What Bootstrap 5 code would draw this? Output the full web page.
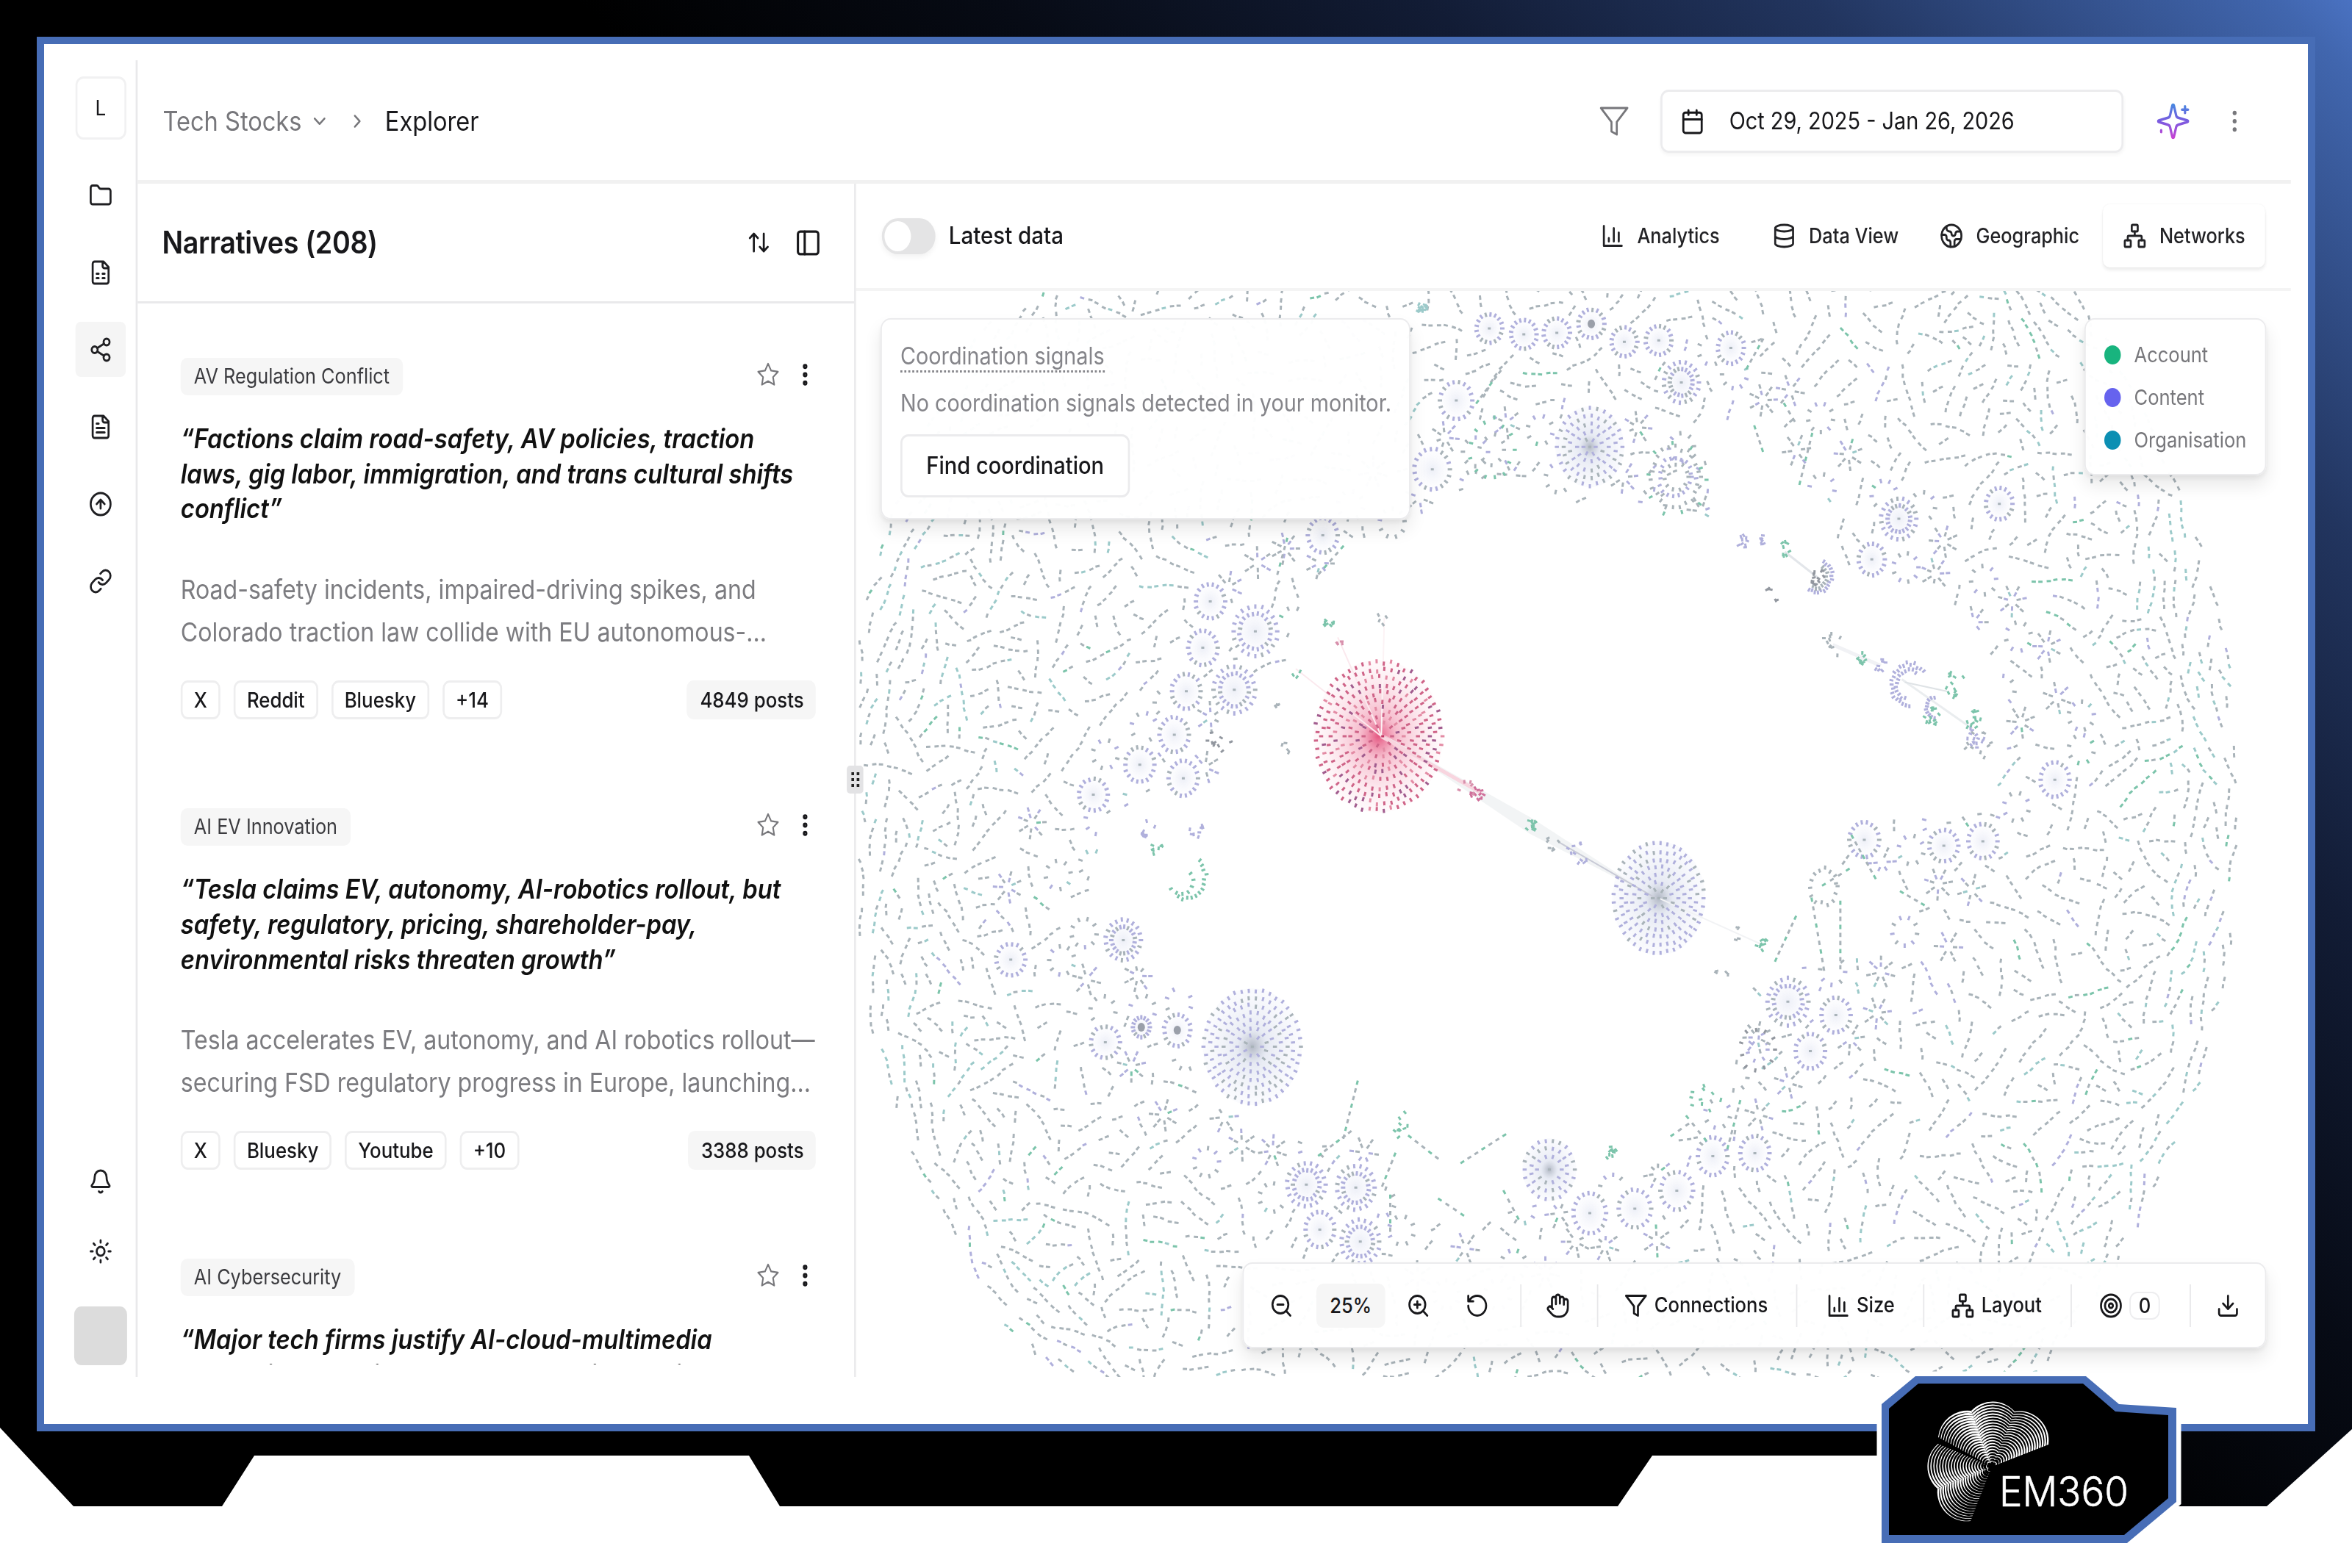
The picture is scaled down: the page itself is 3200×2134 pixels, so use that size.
<!DOCTYPE html>
<html lang="en">
<head>
  <meta charset="UTF-8">
  <title>Explorer - Tech Stocks</title>
  <link href="https://cdn.jsdelivr.net/npm/bootstrap@5.3.2/dist/css/bootstrap.min.css" rel="stylesheet">
  <style>
    body { width: 3200px; height: 2134px; overflow: hidden; background: #fff; font-family: Inter, "Liberation Sans", sans-serif; color: #18181b; }
    .stage { height: 2050px; padding: 50px; background: linear-gradient(225deg, #4a72c2 0, #4166ae 2%, #22355f 14%, #121c35 24%, #070b15 35%, #000 46%);
      clip-path: polygon(0 0, 3200px 0, 3200px 1945px, 3084px 2050px, 2900px 2050px, 2900px 1981px, 2248px 1981px, 2201px 2050px, 1061px 2050px, 1019px 1981px, 346px 1981px, 302px 2050px, 100px 2050px, 0 1943px); }
    .screen { height: 1898px; border: 10px solid #476db6; background: #fff; padding: 22px 0 0 40px; }
    /* the app is drawn a little narrower than tall */
    .app { width: 3352px; height: 1792px; transform: scaleX(.9); transform-origin: 0 0; }
    .ico { width: 36px; height: 36px; fill: none; stroke: currentColor; stroke-width: 2; stroke-linecap: round; stroke-linejoin: round; flex: none; }
    .thin { stroke-width: 1.5; }

    .side { width: 97px; padding: 22px 14px 16px 2px; border-right: 3px solid #e9e9eb; }
    .side .org { width: 77px; height: 86px; border: 3px solid #f1f1f2; border-radius: 12px; font-size: 29px; margin-bottom: 38px; }
    .side a { width: 76px; height: 75px; border-radius: 8px; color: #1f1f22; }
    .side .main-nav { gap: 30px; }
    .side .sub-nav { gap: 20px; margin-bottom: 38px; }
    .side .on { background: #f5f5f5; }
    .side .me { width: 80px; height: 80px; border-radius: 11px; background: #dcdcdc; }

    .topbar { height: 168px; padding: 3px 67px 0 38px; border-bottom: 5px solid #f1f1f1; font-size: 36.2px; }
    .muted { color: #77777b; }
    .daterange { width: 700px; height: 86px; border: 3px solid #ececee; border-radius: 12px; padding-left: 27px; font-size: 32.1px; box-shadow: 0 3px 5px rgba(0,0,0,.04); }

    .left { width: 1086px; border-right: 3px solid #ebebed; position: relative; }
    .left-head { height: 163px; padding: 0 58px 0 37px; border-bottom: 3px solid #e9e9eb; }
    .left-head h2 { font-size: 41.8px; font-weight: 600; letter-spacing: -.4px; }
    .list { height: 1444px; overflow: hidden; padding: 74px 58px 0 65px; }
    .story { margin-bottom: 121px; }
    .tag { height: 51px; line-height: 51px; padding: 0 20px; border-radius: 10px; background: #f6f6f6; font-size: 28.1px; color: #3b3b3f; }
    .story .ico { position: relative; top: -3px; }
    .story h3 { font-size: 36.4px; line-height: 47.7px; font-weight: 600; font-style: italic; margin: 36px 0 57px; color: #111; white-space: nowrap; }
    .story p { font-size: 35.7px; line-height: 57.5px; color: #7c7c80; margin-bottom: 37px; white-space: nowrap; }
    .chip { height: 53px; line-height: 47px; padding: 0 17px; border: 3px solid #eeeeef; border-radius: 11px; font-size: 28.7px; font-weight: 500; }
    .posts { height: 53px; line-height: 53px; padding: 0 18px 0 20px; border-radius: 10px; background: #f6f6f6; font-size: 28.7px; font-weight: 500; }
    .grip { position: absolute; left: 1072px; top: 792px; width: 25px; height: 38px; border-radius: 5px; background: #e3e3e5; }

    .tools { height: 146px; padding: 0 39px; border-bottom: 4px solid #f4f4f4; }
    .toggle { width: 81px; height: 49px; border-radius: 25px; background: #e4e4e5; padding: 4px; box-shadow: 0 4px 8px rgba(0,0,0,.05); }
    .toggle i { display: block; width: 40px; height: 41px; border-radius: 50%; background: #fff; }
    .tools a { height: 86px; padding: 0 31px; gap: 19px; border-radius: 10px; color: #232326; text-decoration: none; font-size: 28.1px; font-weight: 500; }
    .tools a.on { padding: 0 30px; margin-left: 5px; box-shadow: 0 4px 5px rgba(0,0,0,.07), 0 0 3px rgba(0,0,0,.06); }

    .graph { position: relative; height: 1478px; overflow: hidden; }
    .graph > svg { display: block; width: 100%; height: 1478px; }
    .float { position: absolute; background: rgba(255,255,255,.97); border: 2px solid #ebebed; border-radius: 15px; box-shadow: 0 14px 26px rgba(0,0,0,.09), 0 4px 8px rgba(0,0,0,.06); }
    .signals { left: 37px; top: 37px; width: 801px; height: 274px; padding: 26px 0 0 28px; font-size: 32px; color: #85858a; white-space: nowrap; }
    .signals u { text-decoration: none; border-bottom: 3px dotted #85858a; line-height: 36px; }
    .signals button { width: 347px; height: 86px; border: 3px solid #ebebed; border-radius: 12px; background: #fff; font-size: 32.3px; font-weight: 500; color: #18181b; }
    .legend { right: 37px; top: 37px; width: 275px; height: 214px; padding: 2px 26px 0 28px; font-size: 28.4px; color: #77777b; }
    .legend li { height: 58px; gap: 20px; }
    .legend i { width: 25px; height: 26px; border-radius: 50%; flex: none; }
    .dock { right: 37px; bottom: 39px; width: 1548px; height: 117px; font-size: 28.4px; font-weight: 500; }
    .dock > div { height: 58px; gap: 10px; }
    .dock > div + div { border-left: 2px solid #e8e8ea; }
    .zoomval { width: 104px; height: 60px; line-height: 60px; border-radius: 10px; background: #f6f6f6; }
    .count { width: 46px; height: 38px; line-height: 34px; border: 2px solid #ededef; border-radius: 12px; }
    .seal { position: absolute; left: 2541px; top: 1860px; }
  </style>
</head>
<body class="position-relative">

  <!-- icon sprite -->
  <svg width="0" height="0" class="position-absolute">
    <defs>
      <linearGradient id="spark" x1="0" y1="0" x2="0" y2="24" gradientUnits="userSpaceOnUse"><stop offset="0" stop-color="#3f8fe0"/><stop offset=".5" stop-color="#7a5be0"/><stop offset="1" stop-color="#d63fd0"/></linearGradient>
      <symbol id="folder" viewBox="0 0 24 24"><path d="M20 20a2 2 0 0 0 2-2V8a2 2 0 0 0-2-2h-7.9a2 2 0 0 1-1.69-.9L9.6 3.9A2 2 0 0 0 7.93 3H4a2 2 0 0 0-2 2v13a2 2 0 0 0 2 2Z"/></symbol>
      <symbol id="sheet" viewBox="0 0 24 24"><path d="M15 2H6a2 2 0 0 0-2 2v16a2 2 0 0 0 2 2h12a2 2 0 0 0 2-2V7ZM14 2v4a2 2 0 0 0 2 2h4M8 13h2M14 13h2M8 17h2M14 17h2"/></symbol>
      <symbol id="doc" viewBox="0 0 24 24"><path d="M15 2H6a2 2 0 0 0-2 2v16a2 2 0 0 0 2 2h12a2 2 0 0 0 2-2V7ZM14 2v4a2 2 0 0 0 2 2h4M10 9H8M16 13H8M16 17H8"/></symbol>
      <symbol id="share" viewBox="0 0 24 24"><circle cx="18" cy="5" r="3"/><circle cx="6" cy="12" r="3"/><circle cx="18" cy="19" r="3"/><path d="M8.59 13.51l6.83 3.98M15.41 6.51l-6.82 3.98"/></symbol>
      <symbol id="up" viewBox="0 0 24 24"><circle cx="12" cy="12" r="10"/><path d="m16 12-4-4-4 4M12 16V8"/></symbol>
      <symbol id="link" viewBox="0 0 24 24"><path d="M10 13a5 5 0 0 0 7.54.54l3-3a5 5 0 0 0-7.07-7.07l-1.72 1.71M14 11a5 5 0 0 0-7.54-.54l-3 3a5 5 0 0 0 7.07 7.07l1.71-1.71"/></symbol>
      <symbol id="bell" viewBox="0 0 24 24"><path d="M10.27 21a2 2 0 0 0 3.46 0M3.26 15.33A1 1 0 0 0 4 17h16a1 1 0 0 0 .74-1.67C19.41 13.96 18 12.5 18 8A6 6 0 0 0 6 8c0 4.5-1.41 5.96-2.74 7.33"/></symbol>
      <symbol id="sun" viewBox="0 0 24 24"><circle cx="12" cy="12" r="4"/><path d="M12 2v2M12 20v2M4.93 4.93l1.41 1.41M17.66 17.66l1.41 1.41M2 12h2M20 12h2M6.34 17.66l-1.41 1.41M19.07 4.93l-1.41 1.41"/></symbol>
      <symbol id="sort" viewBox="0 0 24 24"><path d="m21 16-4 4-4-4M17 20V4M3 8l4-4 4 4M7 4v16"/></symbol>
      <symbol id="panel" viewBox="0 0 24 24"><rect width="18" height="18" x="3" y="3" rx="2"/><path d="M9 3v18"/></symbol>
      <symbol id="star" viewBox="0 0 24 24"><path d="M12 2l3.09 6.26L22 9.27l-5 4.87 1.18 6.88L12 17.77l-6.18 3.25L7 14.14 2 9.27l6.91-1.01z"/></symbol>
      <symbol id="dots" viewBox="0 0 24 24"><circle cx="12" cy="12" r="1"/><circle cx="12" cy="4.5" r="1"/><circle cx="12" cy="19.5" r="1"/></symbol>
      <symbol id="down" viewBox="0 0 24 24"><path d="m6 9 6 6 6-6"/></symbol>
      <symbol id="right" viewBox="0 0 24 24"><path d="m9 18 6-6-6-6"/></symbol>
      <symbol id="funnel" viewBox="0 0 24 24"><path d="M22 3H2l8 9.46V19l4 2v-8.54z"/></symbol>
      <symbol id="cal" viewBox="0 0 24 24"><path d="M8 2v4M16 2v4M3 10h18"/><rect width="18" height="18" x="3" y="4" rx="2"/></symbol>
      <symbol id="sparkles" viewBox="0 0 24 24"><path d="M9.94 15.5A2 2 0 0 0 8.5 14.06l-6.14-1.58a.5.5 0 0 1 0-.96L8.5 9.94A2 2 0 0 0 9.94 8.5l1.58-6.14a.5.5 0 0 1 .96 0L14.06 8.5A2 2 0 0 0 15.5 9.94l6.14 1.58a.5.5 0 0 1 0 .96L15.5 14.06a2 2 0 0 0-1.44 1.44l-1.58 6.14a.5.5 0 0 1-.96 0zM20 3v4M22 5h-4M4 17.5v1"/></symbol>
      <symbol id="chart" viewBox="0 0 24 24"><path d="M3 3v18h18M18 17V9M13 17V5M8 17v-3"/></symbol>
      <symbol id="db" viewBox="0 0 24 24"><ellipse cx="12" cy="5" rx="9" ry="3"/><path d="M3 5v14a9 3 0 0 0 18 0V5M3 12a9 3 0 0 0 18 0"/></symbol>
      <symbol id="earth" viewBox="0 0 24 24"><path d="M21.54 15H17a2 2 0 0 0-2 2v4.54M7 3.34V5a3 3 0 0 0 3 3 2 2 0 0 1 2 2c0 1.1.9 2 2 2a2 2 0 0 0 2-2c0-1.1.9-2 2-2h3.17M11 21.95V18a2 2 0 0 0-2-2 2 2 0 0 1-2-2v-1a2 2 0 0 0-2-2H2.05"/><circle cx="12" cy="12" r="10"/></symbol>
      <symbol id="net" viewBox="0 0 24 24"><rect x="16" y="16" width="6" height="6" rx="1"/><rect x="2" y="16" width="6" height="6" rx="1"/><rect x="9" y="2" width="6" height="6" rx="1"/><path d="M5 16v-3a1 1 0 0 1 1-1h12a1 1 0 0 1 1 1v3M12 12V8"/></symbol>
      <symbol id="zout" viewBox="0 0 24 24"><circle cx="11" cy="11" r="8"/><path d="M21 21l-4.35-4.35M8 11h6"/></symbol>
      <symbol id="zin" viewBox="0 0 24 24"><circle cx="11" cy="11" r="8"/><path d="M21 21l-4.35-4.35M8 11h6M11 8v6"/></symbol>
      <symbol id="reset" viewBox="0 0 24 24"><path d="M3 12a9 9 0 1 0 9-9 9.75 9.75 0 0 0-6.74 2.74L3 8M3 3v5h5"/></symbol>
      <symbol id="hand" viewBox="0 0 24 24"><path d="M18 11V6a2 2 0 0 0-4 0M14 10V4a2 2 0 0 0-4 0v2M10 10.5V6a2 2 0 0 0-4 0v8M18 8a2 2 0 1 1 4 0v6a8 8 0 0 1-8 8h-2c-2.8 0-4.5-.86-5.99-2.34l-3.6-3.6a2 2 0 0 1 2.83-2.82L7 15"/></symbol>
      <symbol id="target" viewBox="0 0 24 24"><circle cx="12" cy="12" r="10"/><circle cx="12" cy="12" r="6"/><circle cx="12" cy="12" r="2"/></symbol>
      <symbol id="save" viewBox="0 0 24 24"><path d="M12 15V3M21 15v4a2 2 0 0 1-2 2H5a2 2 0 0 1-2-2v-4M7 10l5 5 5-5"/></symbol>
    </defs>
  </svg>

  <div class="stage">
    <div class="screen">
      <div class="app d-flex">

        <nav class="side d-flex flex-column align-items-center flex-shrink-0">
          <div class="org d-flex align-items-center justify-content-center">L</div>
          <div class="main-nav d-flex flex-column">
            <a class="d-flex align-items-center justify-content-center"><svg class="ico"><use href="#folder"/></svg></a>
            <a class="d-flex align-items-center justify-content-center"><svg class="ico"><use href="#sheet"/></svg></a>
            <a class="on d-flex align-items-center justify-content-center"><svg class="ico"><use href="#share"/></svg></a>
            <a class="d-flex align-items-center justify-content-center"><svg class="ico"><use href="#doc"/></svg></a>
            <a class="d-flex align-items-center justify-content-center"><svg class="ico"><use href="#up"/></svg></a>
            <a class="d-flex align-items-center justify-content-center"><svg class="ico"><use href="#link"/></svg></a>
          </div>
          <div class="sub-nav d-flex flex-column mt-auto">
            <a class="d-flex align-items-center justify-content-center"><svg class="ico"><use href="#bell"/></svg></a>
            <a class="d-flex align-items-center justify-content-center"><svg class="ico"><use href="#sun"/></svg></a>
          </div>
          <div class="me"></div>
        </nav>

        <div class="flex-grow-1 d-flex flex-column">
          <header class="topbar d-flex align-items-center">
            <span class="muted">Tech Stocks</span>
            <svg class="ico muted" style="width:30px;margin-left:12px"><use href="#down"/></svg>
            <svg class="ico muted" style="width:30px;margin:0 27px 0 27px"><use href="#right"/></svg>
            <span>Explorer</span>
            <svg class="ico thin muted ms-auto" style="width:48px;height:48px;margin-right:46px"><use href="#funnel"/></svg>
            <div class="daterange d-flex align-items-center">
              <svg class="ico" style="width:37px;height:39px;margin-right:37px"><use href="#cal"/></svg>
              <span>Oct 29, 2025 - Jan 26, 2026</span>
            </div>
            <svg class="ico" style="width:54px;height:54px;stroke:url(#spark);stroke-width:1.6;margin:0 48px 0 48px"><use href="#sparkles"/></svg>
            <svg class="ico muted"><use href="#dots"/></svg>
          </header>

          <div class="d-flex flex-grow-1">
            <section class="left flex-shrink-0">
              <div class="left-head d-flex align-items-center">
                <h2 class="m-0 me-auto">Narratives (208)</h2>
                <svg class="ico" style="margin-right:36px"><use href="#sort"/></svg>
                <svg class="ico" style="width:41px;height:41px;margin-right:-9px"><use href="#panel"/></svg>
              </div>
              <div class="list" id="list"></div>
              <div class="grip d-flex align-items-center justify-content-center">
                <svg width="14" height="22" fill="#222"><path d="M1 1h4v4h-4zM9 1h4v4h-4zM1 9h4v4h-4zM9 9h4v4h-4zM1 17h4v4h-4zM9 17h4v4h-4z"/></svg>
              </div>
            </section>

            <section class="flex-grow-1">
              <div class="tools d-flex align-items-center">
                <div class="toggle"><i></i></div>
                <span class="me-auto" style="margin-left:20px;font-size:32.8px;font-weight:500">Latest data</span>
                <a class="d-flex align-items-center"><svg class="ico"><use href="#chart"/></svg>Analytics</a>
                <a class="d-flex align-items-center" style="margin-left:18px"><svg class="ico"><use href="#db"/></svg>Data View</a>
                <a class="d-flex align-items-center"><svg class="ico"><use href="#earth"/></svg>Geographic</a>
                <a class="on d-flex align-items-center"><svg class="ico"><use href="#net"/></svg>Networks</a>
              </div>
              <div class="graph">
                <svg id="net-graph" viewBox="1165 396 1952 1478" preserveAspectRatio="none"></svg>

                <div class="float signals">
                  <div><u>Coordination signals</u></div>
                  <div style="margin:16px 0 18px">No coordination signals detected in your monitor.</div>
                  <button>Find coordination</button>
                </div>

                <ul class="float legend list-unstyled m-0 d-flex flex-column justify-content-center">
                  <li class="d-flex align-items-center"><i style="background:#18b47e"></i>Account</li>
                  <li class="d-flex align-items-center"><i style="background:#6663ee"></i>Content</li>
                  <li class="d-flex align-items-center"><i style="background:#0c8fb3"></i>Organisation</li>
                </ul>

                <div class="float dock d-flex align-items-center">
                  <div class="d-flex align-items-center justify-content-center pe-2" style="width:418px">
                    <svg class="ico"><use href="#zout"/></svg>
                    <span class="zoomval text-center" style="margin:0 22px 0 25px">25%</span>
                    <svg class="ico"><use href="#zin"/></svg>
                    <svg class="ico" style="margin-left:43px"><use href="#reset"/></svg>
                  </div>
                  <div class="d-flex align-items-center justify-content-center pe-1" style="width:116px"><svg class="ico"><use href="#hand"/></svg></div>
                  <div class="d-flex align-items-center justify-content-center pe-1" style="width:302px"><svg class="ico"><use href="#funnel"/></svg>Connections</div>
                  <div class="d-flex align-items-center justify-content-center" style="width:192px"><svg class="ico"><use href="#chart"/></svg>Size</div>
                  <div class="d-flex align-items-center justify-content-center pe-1" style="width:223px"><svg class="ico"><use href="#net"/></svg>Layout</div>
                  <div class="d-flex align-items-center justify-content-center pe-1" style="width:180px"><svg class="ico"><use href="#target"/></svg><span class="count text-center">0</span></div>
                  <div class="d-flex align-items-center justify-content-center" style="width:114px"><svg class="ico"><use href="#save"/></svg></div>
                </div>
              </div>
            </section>
          </div>
        </div>
      </div>
    </div>
  </div>

  <svg class="seal" width="440" height="254" viewBox="2541 1860 440 254">
    <path d="M2560 1911L2606 1873H2838L2883 1911L2961 1916V2044L2894 2100H2560Z" fill="#fff" stroke="#fff" stroke-width="13"/>
    <path d="M2560 1911L2606 1873H2838L2883 1911L2961 1916V2044L2894 2100H2560Z" fill="#476db6"/>
    <path d="M2570 1917L2610 1883H2834L2878 1921L2950 1926V2039L2890 2089H2570Z" fill="#000"/>
    <g id="fan" fill="#fff"></g>
    <text x="2720" y="2050" textLength="176" lengthAdjust="spacingAndGlyphs" font-size="56" font-weight="300" fill="#fff" stroke="#fff" stroke-width=".6" font-family="Inter, sans-serif">EM360</text>
  </svg>

  <script>
    const stories = [
      { tag: 'AV Regulation Conflict',
        title: ['“Factions claim road-safety, AV policies, traction', 'laws, gig labor, immigration, and trans cultural shifts', 'conflict”'],
        text: ['Road-safety incidents, impaired-driving spikes, and', 'Colorado traction law collide with EU autonomous-...'],
        chips: ['X', 'Reddit', 'Bluesky', '+14'], posts: 4849 },
      { tag: 'AI EV Innovation',
        title: ['“Tesla claims EV, autonomy, AI-robotics rollout, but', 'safety, regulatory, pricing, shareholder-pay,', 'environmental risks threaten growth”'],
        text: ['Tesla accelerates EV, autonomy, and AI robotics rollout—', 'securing FSD regulatory progress in Europe, launching...'],
        chips: ['X', 'Bluesky', 'Youtube', '+10'], posts: 3388 },
      { tag: 'AI Cybersecurity',
        title: ['“Major tech firms justify AI-cloud-multimedia', 'expansion, despite concerns over risks, privacy and'] }
    ];

    document.getElementById('list').innerHTML = stories.map(s => `
      <article class="story">
        <div class="d-flex align-items-center">
          <span class="tag me-auto">${s.tag}</span>
          <svg class="ico thin muted" style="margin-right:20px"><use href="#star"/></svg>
          <svg class="ico" style="stroke-width:2.6;margin-right:-2px"><use href="#dots"/></svg>
        </div>
        <h3>${s.title.join('<br>')}</h3>
        ${s.text ? `<p>${s.text.join('<br>')}</p>
        <div class="d-flex" style="gap:20px">
          ${s.chips.map(c => `<span class="chip">${c}</span>`).join('')}
          <span class="posts ms-auto">${s.posts} posts</span>
        </div>` : ''}
      </article>`).join('');

    // logo: arcs scaled from one pivot, thicker at the bright edge
    const pv = [2710, 1996];
    const lobes = [
      [[2637, 1956], [2682, 1920], .28, .95], [[2682, 1920], [2741, 1921], .8, .35],
      [[2741, 1921], [2787, 1966], .4, .75], [[2681, 2070], [2636, 2026], .2, .8], [[2636, 2026], [2637, 1965], .8, .3]
    ];
    let fan = '';
    const at = (p, k) => (pv[0] + (p[0] - pv[0]) * k).toFixed(2) + ' ' + (pv[1] + (p[1] - pv[1]) * k).toFixed(2);
    lobes.forEach(([a, b, wa, wb]) => {
      for (let i = 2; i <= 22; i++) {
        const k = i / 22, s = 1 / 22;
        fan += `<path d="M${at(a, k)}A${40 * k} ${40 * k} 0 0 1 ${at(b, k)}L${at(b, k - s * wb)}A${40 * k - 2} ${40 * k - 2} 0 0 0 ${at(a, k - s * wa)}Z"/>`;
      }
    });
    document.getElementById('fan').innerHTML = fan;

    // network graph
    let seed = 360;
    function rnd() {
      seed = (seed + 0x6D2B79F5) | 0;
      let t = Math.imul(seed ^ (seed >>> 15), 1 | seed);
      t = (t + Math.imul(t ^ (t >>> 7), 61 | t)) ^ t;
      return ((t ^ (t >>> 14)) >>> 0) / 4294967296;
    }
    const U = 3200 / 1568;   // graph units to pixels
    const paths = {};
    function dash(color, x, y, dx, dy, len) {
      const m = Math.hypot(dx, dy) || 1, hx = dx / m * len / 2, hy = dy / m * len / 2;
      (paths[color] = paths[color] || []).push(`M${(x - hx).toFixed(1)} ${(y - hy).toFixed(1)}l${(2 * hx).toFixed(1)} ${(2 * hy).toFixed(1)}`);
    }
    const GREY = '#a9b3b9', GREEN = '#7cc4ab', VIOLET = '#b0b0dc', TEAL = '#9ccaca', DARK = '#92979f';
    let under = '';

    // x, y, rx, ry, rings, tone
    const hubs = [
      [993,219,10,11,1],[1016,223,10,11,1],[1038,222,10,11,1],[1061,216,10,11,1,'dark'],[1083,228,10,11,1],[1106,227,10,11,1],[1154,232,10,12,1],
      [1121,255,13,15,2],[971,267,12,14,1],[955,313,13,15,1],[1060,298,23,27,4],[1266,346,13,15,2],[1333,336,10,12,1],[1248,373,10,12,1],
      [882,357,11,13,1],[807,401,11,13,1],[837,421,16,18,2],[802,432,11,13,1],[791,461,11,13,1],[823,460,15,17,2],[783,490,11,13,1],
      [760,510,11,13,1],[789,519,11,13,1],[729,530,11,12,1],[749,627,13,15,2],[674,640,11,12,1],[737,695,11,12,1],[761,685,7,8,1,'dark'],
      [785,687,10,12,1,'dark'],[835,698,33,39,6],[871,790,14,16,2],[904,792,14,16,2],[880,820,11,13,1],[907,828,14,16,2],[1033,780,18,21,4],
      [1060,809,12,15,1],[1090,806,12,14,1],[1118,794,12,14,1],[1142,771,11,14,1],[1170,769,11,13,1],[1192,668,15,17,2],[1224,677,11,13,1],
      [1207,701,11,13,1],[1243,560,11,13,1],[1296,564,11,12,1],[1322,561,11,13,1],[1370,520,11,13,1],[1106,599,31,38,6],[919,491,43,51,8,'red']
    ];
    hubs.forEach(([cx, cy, rx, ry, rings, tone]) => {
      const X = cx * U, Y = cy * U, RX = rx * U, RY = ry * U;
      const c = tone === 'red' ? '#cf6488' : VIOLET;
      const fx = tone === 'red' ? X + 6 : X;
      const big = rings > 3;
      under += `<ellipse cx="${X}" cy="${Y}" rx="${RX}" ry="${RY}" fill="url(#${tone === 'red' ? 'glowR' : big ? 'glowB' : 'glowS'})"/>`;
      const step = big ? 10.5 : 9.5;
      for (let j = 0; j < (big ? 99 : rings); j++) {
        const r = RY - 3 - j * step;
        if (r < (big ? 9 : 8)) break;
        const n = big ? Math.round(2 * Math.PI * r / 11.5) : Math.round(12 + RY * .22);
        for (let i = 0; i < n; i++) {
          const t = (i + (j % 2) * .5) / n * 2 * Math.PI, k = r / RY + (rnd() - .5) * .05;
          const x = fx + (X - fx) * k + Math.cos(t) * RX * k, y = Y + Math.sin(t) * RY * k;
          dash(tone === 'red' && rnd() < .2 ? '#a15c8e' : rnd() < .25 ? (tone === 'red' ? '#e38ba4' : GREY) : c, x, y, Math.cos(t), Math.sin(t), big ? 5.5 : 6);
        }
      }
      if (tone === 'dark') under += `<ellipse cx="${X}" cy="${Y}" rx="5" ry="6" fill="#9a9fa9"/>`;
      else dash(tone === 'red' ? '#c43362' : GREY, fx, Y, 1, 0, 4);
    });

    const hole = [[868,395],[905,362],[930,360],[955,340],[985,325],[1010,320],[1045,335],[1085,335],[1140,345],[1140,280],[1175,285],[1215,335],[1235,385],[1290,390],
      [1325,425],[1335,470],[1332,540],[1310,545],[1250,545],[1222,575],[1270,585],[1250,640],[1205,640],[1170,655],[1155,720],[1120,750],[1120,775],[1060,785],[990,815],[950,815],[920,780],[920,755],
      [870,760],[800,735],[795,665],[770,650],[735,620],[725,590],[740,545],[775,530],[812,535],[812,480],[855,450]];
    function inHole(x, y) {
      let c = false;
      for (let i = 0, j = hole.length - 1; i < hole.length; j = i++) {
        const [xi, yi] = hole[i], [xj, yj] = hole[j];
        if ((yi > y) !== (yj > y) && x < (xj - xi) * (y - yi) / (yj - yi) + xi) c = !c;
      }
      return c;
    }
    const edge = (x, y) => Math.hypot((x - 1028) / 466, (y - 540) / 536);
    function free(x, y) {
      if (x < 572 || y < 190 || y > 920 || edge(x, y) > 1 || inHole(x, y) || (x < 680 && y < 215)) return false;
      return !hubs.some(h => Math.hypot((x - h[0]) / (h[2] + 3), (y - h[1]) / (h[3] + 3)) < 1);
    }
    const cell = {};
    const key = (x, y) => Math.floor(x / 4) + '_' + Math.floor(y / 4);
    function clear(x, y, d) {
      const gx = Math.floor(x / 4), gy = Math.floor(y / 4);
      for (let a = -3; a <= 3; a++) for (let b = -3; b <= 3; b++)
        for (const p of cell[(gx + a) + '_' + (gy + b)] || []) if (Math.hypot(p[0] - x, p[1] - y) < d) return false;
      return true;
    }
    const mark = (x, y) => (cell[key(x, y)] = cell[key(x, y)] || []).push([x, y]);
    const nearHole = (x, y, d) => [[d,0],[-d,0],[0,d],[0,-d]].some(o => inHole(x + o[0], y + o[1]));
    const tint = e => { const q = rnd(); return q < .05 + Math.max(0, e - .75) * .9 ? TEAL : q > .96 ? GREEN : q > .91 ? VIOLET : GREY; };

    // small stars around the opening
    for (let i = 0; i < 4000; i++) {
      const x = 572 + rnd() * 900, y = 195 + rnd() * 720;
      if (!free(x, y) || !nearHole(x, y, 55) || !clear(x, y, 12)) continue;
      const n = 6 + Math.floor(rnd() * 4), t0 = rnd() * 6;
      for (let k = 0; k < n; k++) {
        const t = t0 + k / n * 2 * Math.PI;
        for (const r of [5, 9.5]) {
          const px = x + Math.cos(t) * r * .88, py = y + Math.sin(t) * r;
          if (!free(px, py)) continue;
          if (r > 5 || n < 8) dash(rnd() < .3 ? VIOLET : tint(.5), px * U, py * U, Math.cos(t), Math.sin(t), 6);
          mark(px, py);
        }
      }
      mark(x, y);
    }
    // short chains everywhere else
    for (let i = 0; i < 26000; i++) {
      let x = 572 + rnd() * 930, y = 190 + rnd() * 730;
      const e = edge(x, y), gap = e > .8 ? 7 : 8.6;
      if (!free(x, y) || !clear(x, y, gap)) continue;
      let t = e > .92 ? Math.atan2((y - 540) / 536, (x - 1028) / 466) + Math.PI / 2 + (rnd() - .5) : rnd() * 2 * Math.PI;
      const n = 4 + Math.floor(rnd() * 4), pts = [];
      for (let k = 0; k < n; k++) {
        if (!free(x, y) || !clear(x, y, gap - 1)) break;
        pts.push([x, y, t]);
        const s = k % 2 ? 5.9 : 4.7;
        x += Math.cos(t) * s * .95; y += Math.sin(t) * s * 1.05;
        t += (rnd() - .5) * .5;
      }
      if (pts.length < 2) continue;
      const c = tint(e);
      pts.forEach(p => { mark(p[0], p[1]); dash(rnd() < .3 ? tint(e) : c, p[0] * U, p[1] * U, Math.cos(p[2]), Math.sin(p[2]), 5.8); });
    }

    // loose groups inside the opening: x, y, spread, count, colour
    [[772,566,5,7,GREEN],[765,553,6,8,VIOLET],[797,553,6,8,VIOLET],[1022,551,5,12,GREEN],[985,529,5,12,'#cf6f9a'],
     [977,526,7,5,'#d890ac'],[1052,569,8,10,VIOLET],[1035,561,6,6,GREY],[1175,630,5,10,GREEN],[1160,622,6,4,GREY],[1148,650,5,4,GREY],[886,416,4,7,GREEN],[893,430,4,4,'#d890ac'],
     [923,412,5,4,GREY],[866,448,5,3,GREEN],[852,473,4,3,GREY],[856,499,8,4,GREY],[812,495,12,9,DARK],[1190,366,5,8,GREEN],[1162,362,5,9,VIOLET],[1175,360,3,7,VIOLET],[1183,395,6,5,DARK],
     [1213,386,6,12,DARK],[1222,430,8,9,GREY],[1241,439,5,9,GREEN],[1254,444,5,7,VIOLET],[1288,478,6,14,GREEN],[1302,456,9,13,GREEN],
     [1316,492,8,14,VIOLET],[1315,480,7,12,GREEN],[1318,496,11,10,GREY],[1075,771,7,9,GREEN],[1135,733,10,9,GREEN],[936,750,10,10,GREEN],
     [948,206,4,14,TEAL]
    ].forEach(([x, y, s, n, c]) => {
      for (let i = 0; i < n; i++) {
        const t = rnd() * 6.28, r = Math.sqrt(rnd()) * s;
        dash(c, (x + Math.cos(t) * r * .9) * U, (y + Math.sin(t) * r) * U, rnd() - .5, rnd() - .3, 5);
      }
    });
    // half rings: x, y, rx, ry, from, to (degrees), count, colour
    [[1273,457,12,14,90,320,20,VIOLET],[1273,457,9,10,110,300,12,VIOLET],[1211,384,10,11,-60,120,15,VIOLET],[1211,384,7,8,-50,110,9,GREY],[1291,472,7,7,100,260,9,VIOLET],
     [1117,318,16,20,0,350,22,GREY],[1117,318,11,13,0,350,18,VIOLET],[1117,318,8,9,0,340,10,GREY],[1117,320,19,24,0,340,9,GREEN],
     [1172,700,11,14,0,330,10,DARK],[1172,700,7,8,0,330,6,VIOLET],[1216,591,9,12,0,350,14,GREY],[792,585,12,14,-50,120,12,GREEN],[788,588,8,9,-40,150,6,GREEN],[995,300,14,20,0,330,12,GREEN],[995,300,8,10,0,330,7,GREY]
    ].forEach(([x, y, rx, ry, a, b, n, c]) => {
      for (let i = 0; i <= n; i++) {
        const t = (a + (b - a) * i / n) * Math.PI / 180, j = .9 + rnd() * .2;
        dash(c, (x + Math.cos(t) * rx * j) * U, (y + Math.sin(t) * ry * j) * U, Math.cos(t), Math.sin(t), 5.5);
      }
    });
    // stray chains inside the opening
    [[905,722,896,758],[880,770,900,755],[940,758,958,772],[975,775,1003,757],[930,770,922,790],[1208,600,1216,646],[1184,640,1197,612],[1232,580,1216,590],[1227,602,1227,645],
     [1235,558,1250,585],[1268,595,1282,603],[1125,745,1137,760],[1115,757,1125,750],[1160,735,1152,765],[1165,245,1175,227],[858,360,852,382],[895,365,880,382],[985,268,1000,248],[1200,322,1208,290],
     [960,800,975,810],[1003,795,1012,812],[927,798,927,820],[1175,300,1170,285],[1190,270,1196,280]
    ].forEach(([a, b, c, d]) => {
      const n = Math.round(Math.hypot(c - a, d - b) / 5.5);
      for (let i = 0; i <= n; i++) dash(i % 3 ? GREY : GREEN, (a + (c - a) * i / n) * U, (b + (d - b) * i / n) * U, c - a, d - b, 5.8);
    });

    const line = (a, b, c, d, w, s) => `<path d="M${a * U} ${b * U}L${c * U} ${d * U}" stroke="${s}" stroke-width="${w}" fill="none"/>`;
    under += `<path d="M${921 * U} ${489 * U}L${1022 * U} ${546 * U}L${1104 * U} ${599 * U}L${1020 * U} ${556 * U}Z" fill="#eff1f3" opacity=".8"/>`
      + line(921, 491, 988, 529, 5, '#f8d5df') + line(1040, 562, 1104, 599, 2, '#c9cbd6')
      + line(921, 491, 892, 425, 2, '#fbe9ee') + line(921, 491, 923, 412, 2, '#fcf3f5') + line(921, 491, 864, 446, 2, '#fbe9ee')
      + line(1190, 368, 1213, 386, 3, '#e3e6ea') + line(1222, 430, 1254, 444, 5, '#f1f2f5') + line(1268, 453, 1315, 486, 3, '#eaedef') + line(1270, 455, 1298, 461, 2, '#dfe3e6') + line(1106, 599, 1175, 630, 2, '#f2f3f5');

    document.getElementById('net-graph').innerHTML = `
      <defs>
        <radialGradient id="glowR"><stop offset="0" stop-color="#e0396b" stop-opacity=".85"/><stop offset=".28" stop-color="#f08fab" stop-opacity=".6"/><stop offset=".7" stop-color="#f9c9d7" stop-opacity=".4"/><stop offset="1" stop-color="#fde6ed" stop-opacity=".2"/></radialGradient>
        <radialGradient id="glowB"><stop offset="0" stop-color="#a9b0bd" stop-opacity=".9"/><stop offset=".3" stop-color="#d4daea" stop-opacity=".55"/><stop offset="1" stop-color="#f0f2fb" stop-opacity=".3"/></radialGradient>
        <radialGradient id="glowS"><stop offset="0" stop-color="#e6e9f4" stop-opacity=".75"/><stop offset="1" stop-color="#fafaff" stop-opacity=".1"/></radialGradient>
      </defs>${under}`
      + Object.entries(paths).map(([c, d]) => `<path d="${d.join('')}" stroke="${c}" stroke-width="3" fill="none"/>`).join('');
  </script>
  <script src="https://cdn.jsdelivr.net/npm/bootstrap@5.3.2/dist/js/bootstrap.bundle.min.js"></script>
</body>
</html>
